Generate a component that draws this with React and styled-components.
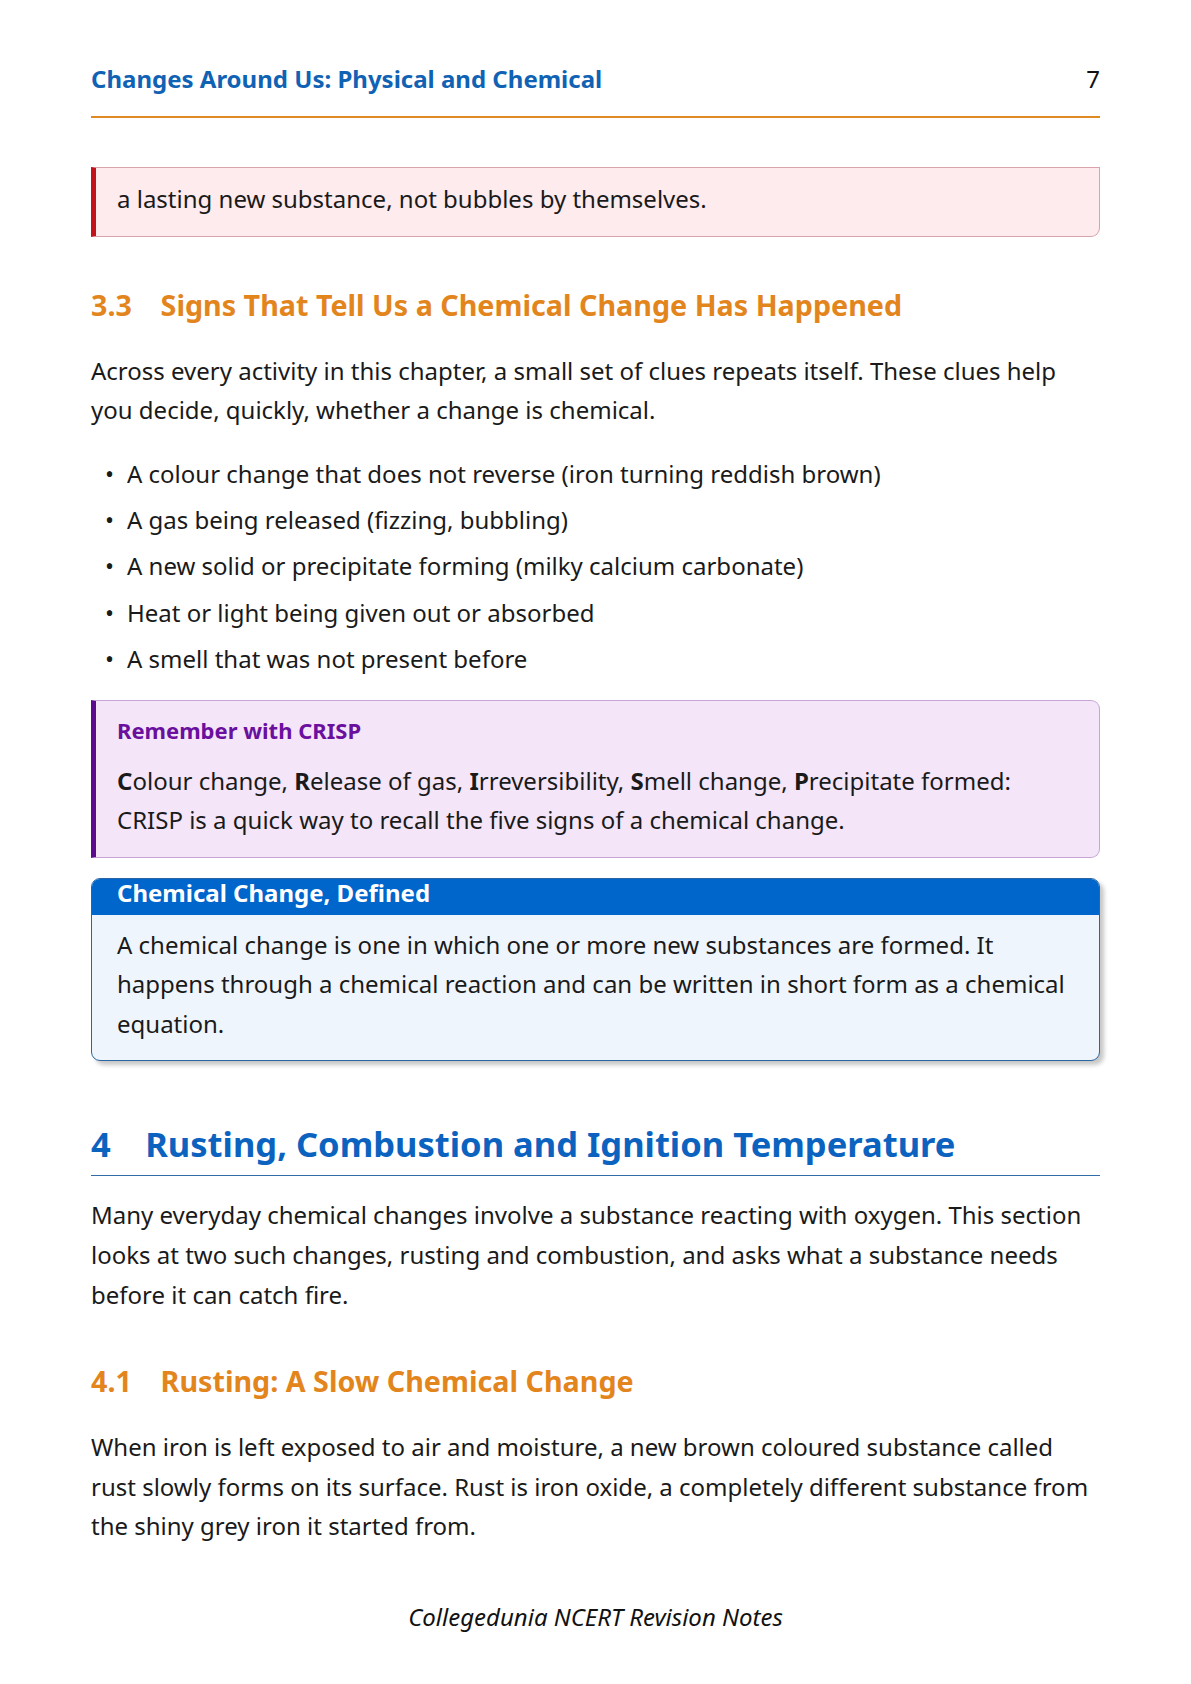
import React from "react";
import styled, { createGlobalStyle } from "styled-components";

const GlobalStyle = createGlobalStyle`
  html, body {
    margin: 0;
    padding: 0;
    background: #fff;
  }
  body {
    font-family: "Noto Sans", "Open Sans", sans-serif;
    color: #1a1a1a;
  }
`;

const Page = styled.div`
  width: 1191px;
  box-sizing: border-box;
  padding: 64px 91px 0;
`;

const RunningHead = styled.header`
  display: flex;
  justify-content: space-between;
  align-items: baseline;
  font-size: 24px;
  line-height: 29px;
  padding-bottom: 23px;
  border-bottom: 2px solid #e08a26;
`;

const HeadTitle = styled.span`
  font-weight: 700;
  color: #1062b4;
`;

const PageNo = styled.span`
  color: #111;
`;

const Callout = styled.div`
  margin-top: ${(p) => p.$mt}px;
  display: flex;
  flex-direction: column;
  gap: ${(p) => p.$gap || 0}px;
  background: ${(p) => p.$bg};
  border: 1px solid ${(p) => p.$border};
  border-left: 5px solid ${(p) => p.$bar};
  border-radius: ${(p) => p.$radius};
  padding: ${(p) => p.$pad};
`;

const CalloutTitle = styled.div`
  font-size: 22px;
  line-height: 29px;
  font-weight: 700;
  color: #6a0f9e;
`;

const Text = styled.p`
  margin: ${(p) => p.$mt || 0}px 0 0;
  font-size: 24px;
  line-height: 39.6px;
  color: #1a1a1a;
`;

const SubHeading = styled.h3`
  margin: ${(p) => p.$mt}px 0 0;
  font-size: 28.7px;
  line-height: 38px;
  font-weight: 700;
  color: #e3851d;
`;

const SectionHeading = styled.h2`
  margin: 61px 0 0;
  font-size: 34.5px;
  line-height: 44px;
  font-weight: 700;
  color: #0c63bf;
  padding-bottom: 9px;
  border-bottom: 1.5px solid #2f6ea8;
`;

const Num = styled.span`
  margin-right: 1em;
`;

const List = styled.ul`
  list-style: none;
  margin: 24px 0 0;
  padding: 0;
  display: flex;
  flex-direction: column;
  gap: 6.7px;
`;

const Item = styled.li`
  display: flex;
  font-size: 24px;
  line-height: 39.6px;
`;

const Marker = styled.span`
  flex: none;
  width: 22px;
  padding-left: 14px;
`;

const DefBox = styled.div`
  margin-top: 20px;
  border: 1px solid #2b66a0;
  border-radius: 9px;
  overflow: hidden;
  background: #eff5fc;
  box-shadow: 4px 4px 4px rgba(0, 0, 0, 0.22);
`;

const DefHead = styled.div`
  background: #0066cc;
  color: #fff;
  font-size: 24px;
  font-weight: 700;
  line-height: 28px;
  padding: 0 25px 8px;
`;

const DefBody = styled.div`
  padding: 10px 25px 17px;
`;

const Footer = styled.footer`
  margin-top: 51px;
  text-align: center;
  font-size: 24px;
  line-height: 39.6px;
  font-style: italic;
  color: #111;
`;

const signs = [
  "A colour change that does not reverse (iron turning reddish brown)",
  "A gas being released (fizzing, bubbling)",
  "A new solid or precipitate forming (milky calcium carbonate)",
  "Heat or light being given out or absorbed",
  "A smell that was not present before",
];

export default function App() {
  return (
    <>
      <GlobalStyle />
      <Page>
        <RunningHead>
          <HeadTitle>Changes Around Us: Physical and Chemical</HeadTitle>
          <PageNo>7</PageNo>
        </RunningHead>

        <Callout
          $mt={49}
          $bg="#fdebed"
          $border="#d8a3ab"
          $bar="#c3121b"
          $radius="0 0 9px 0"
          $pad="11px 21px 17px"
        >
          <Text>a lasting new substance, not bubbles by themselves.</Text>
        </Callout>

        <SubHeading $mt={49}>
          <Num>3.3</Num>Signs That Tell Us a Chemical Change Has Happened
        </SubHeading>
        <Text $mt={27}>
          Across every activity in this chapter, a small set of clues repeats itself. These clues help
          you decide, quickly, whether a change is chemical.
        </Text>

        <List>
          {signs.map((s) => (
            <Item key={s}>
              <Marker>•</Marker>
              {s}
            </Item>
          ))}
        </List>

        <Callout
          $mt={21}
          $bg="#f4e6f8"
          $border="#c7a6d6"
          $bar="#5c0b8f"
          $radius="0 9px 9px 0"
          $pad="15px 21px 17px"
          $gap={16}
        >
          <CalloutTitle>Remember with CRISP</CalloutTitle>
          <Text>
            <b>C</b>olour change, <b>R</b>elease of gas, <b>I</b>rreversibility, <b>S</b>mell change,{" "}
            <b>P</b>recipitate formed: CRISP is a quick way to recall the five signs of a chemical change.
          </Text>
        </Callout>

        <DefBox>
          <DefHead>Chemical Change, Defined</DefHead>
          <DefBody>
            <Text>
              A chemical change is one in which one or more new substances are formed. It happens
              through a chemical reaction and can be written in short form as a chemical equation.
            </Text>
          </DefBody>
        </DefBox>

        <SectionHeading>
          <Num>4</Num>Rusting, Combustion and Ignition Temperature
        </SectionHeading>
        <Text $mt={19}>
          Many everyday chemical changes involve a substance reacting with oxygen. This section looks
          at two such changes, rusting and combustion, and asks what a substance needs before it can
          catch fire.
        </Text>

        <SubHeading $mt={48}>
          <Num>4.1</Num>Rusting: A Slow Chemical Change
        </SubHeading>
        <Text $mt={27}>
          When iron is left exposed to air and moisture, a new brown coloured substance called rust
          slowly forms on its surface. Rust is iron oxide, a completely different substance from the
          shiny grey iron it started from.
        </Text>

        <Footer>Collegedunia NCERT Revision Notes</Footer>
      </Page>
    </>
  );
}
